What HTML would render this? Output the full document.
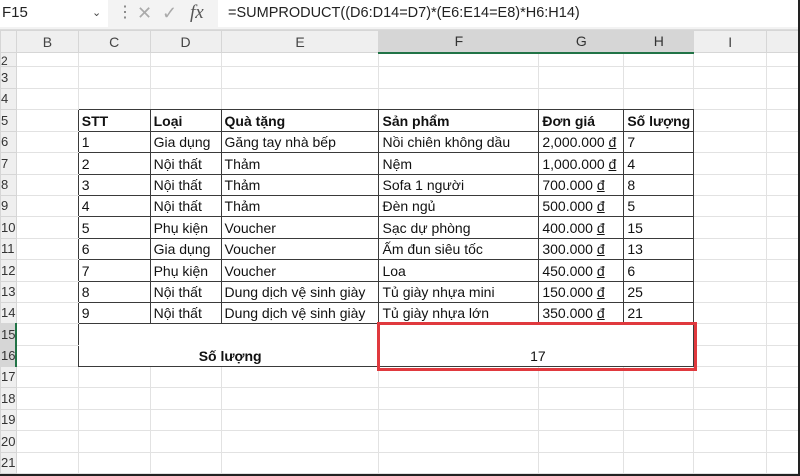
<!DOCTYPE html>
<html><head><meta charset="utf-8"><style>
*{margin:0;padding:0;box-sizing:border-box}
body{width:800px;height:476px;overflow:hidden;background:#fff;font-family:"Liberation Sans",sans-serif;position:relative}
#fb{position:absolute;left:0;top:0;width:800px;height:30px;background:#f3f3f3;border-bottom:1px solid #dcdcdc}
#nb{position:absolute;left:0;top:0;width:108px;height:27px;background:#fff;font-size:15px;line-height:26px;padding-left:2px;color:#222}
#nb span{position:absolute;left:92px;top:0;font-size:11px;color:#444}
#ff{position:absolute;left:218px;top:0;width:580px;height:27px;background:#fff;font-size:14.5px;line-height:26px;padding-left:10px;color:#222}
.ic{position:absolute;top:0;color:#aaa;font-size:18px;line-height:26px}
table{position:absolute;left:0;top:30px;border-collapse:collapse;table-layout:fixed;font-size:14px;color:#111}
td{border:1px solid #e2e2e2;padding:0 0 0 3px;white-space:nowrap;overflow:hidden;line-height:16px}
tr.t td{line-height:10px;font-size:12px;vertical-align:bottom}
tr.h td{background:#efefef;text-align:center;color:#444;font-size:14px;border-color:#d6d6d6;padding:0}
tr.h td.s{background:#d6d6d6;border-bottom:2px solid #217346;color:#333}
td.r{background:#efefef;color:#333;font-size:13px;padding:0;text-align:left;border-color:#d6d6d6}
td.rs{background:#d6d6d6;border-right:2px solid #217346}
.d{border:1px solid #3a3a3a}
.bb{border-bottom:1px solid #3a3a3a}
.br{border-right:1px solid #3a3a3a}
b{font-weight:bold}
u{text-decoration:underline}
#red{position:absolute;left:377px;top:322px;width:320px;height:49px;border:3px solid #e0393e}
#frame{position:absolute;left:0;top:0;width:800px;height:476px;border-right:2px solid #222;border-bottom:2px solid #222;pointer-events:none}
</style></head><body>
<div id="fb">
<div id="nb">F15<span>&#8964;</span></div>
<div class="ic" style="left:117px;color:#777;font-size:16px">&#8942;</div>
<div class="ic" style="left:137px">&#10005;</div>
<div class="ic" style="left:162px">&#10003;</div>
<div class="ic" style="left:190px;color:#555;font-family:'Liberation Serif',serif;font-style:italic;font-size:19px">fx</div>
<div id="ff">=SUMPRODUCT((D6:D14=D7)*(E6:E14=E8)*H6:H14)</div>
</div>
<table>
<colgroup><col style="width:16px"><col style="width:62px"><col style="width:72px"><col style="width:71px"><col style="width:158px"><col style="width:160px"><col style="width:85px"><col style="width:70px"><col style="width:73px"><col style="width:33px"></colgroup>
<tr class="h" style="height:22px"><td></td><td>B</td><td>C</td><td>D</td><td>E</td><td class="s">F</td><td class="s">G</td><td class="s">H</td><td>I</td><td></td></tr>
<tr class="t" style="height:14px"><td class="r">2</td><td></td><td></td><td></td><td></td><td></td><td></td><td></td><td></td><td></td></tr>
<tr style="height:22px"><td class="r">3</td><td></td><td></td><td></td><td></td><td></td><td></td><td></td><td></td><td></td></tr>
<tr style="height:21px"><td class="r">4</td><td></td><td class="bb"></td><td class="bb"></td><td class="bb"></td><td class="bb"></td><td class="bb"></td><td class="bb"></td><td></td><td></td></tr>
<tr style="height:22px"><td class="r">5</td><td class="br"></td><td class="d"><b>STT</b></td><td class="d"><b>Loại</b></td><td class="d"><b>Quà tặng</b></td><td class="d"><b>Sản phẩm</b></td><td class="d"><b>Đơn giá</b></td><td class="d"><b>Số lượng</b></td><td></td><td></td></tr>
<tr style="height:21px"><td class="r">6</td><td class="br"></td><td class="d">1</td><td class="d">Gia dụng</td><td class="d">Găng tay nhà bếp</td><td class="d">Nồi chiên không dầu</td><td class="d">2,000.000 <u>đ</u></td><td class="d">7</td><td></td><td></td></tr>
<tr style="height:22px"><td class="r">7</td><td class="br"></td><td class="d">2</td><td class="d">Nội thất</td><td class="d">Thảm</td><td class="d">Nệm</td><td class="d">1,000.000 <u>đ</u></td><td class="d">4</td><td></td><td></td></tr>
<tr style="height:21px"><td class="r">8</td><td class="br"></td><td class="d">3</td><td class="d">Nội thất</td><td class="d">Thảm</td><td class="d">Sofa 1 người</td><td class="d">700.000 <u>đ</u></td><td class="d">8</td><td></td><td></td></tr>
<tr style="height:21px"><td class="r">9</td><td class="br"></td><td class="d">4</td><td class="d">Nội thất</td><td class="d">Thảm</td><td class="d">Đèn ngủ</td><td class="d">500.000 <u>đ</u></td><td class="d">5</td><td></td><td></td></tr>
<tr style="height:22px"><td class="r">10</td><td class="br"></td><td class="d">5</td><td class="d">Phụ kiện</td><td class="d">Voucher</td><td class="d">Sạc dự phòng</td><td class="d">400.000 <u>đ</u></td><td class="d">15</td><td></td><td></td></tr>
<tr style="height:21px"><td class="r">11</td><td class="br"></td><td class="d">6</td><td class="d">Gia dụng</td><td class="d">Voucher</td><td class="d">Ấm đun siêu tốc</td><td class="d">300.000 <u>đ</u></td><td class="d">13</td><td></td><td></td></tr>
<tr style="height:22px"><td class="r">12</td><td class="br"></td><td class="d">7</td><td class="d">Phụ kiện</td><td class="d">Voucher</td><td class="d">Loa</td><td class="d">450.000 <u>đ</u></td><td class="d">6</td><td></td><td></td></tr>
<tr style="height:21px"><td class="r">13</td><td class="br"></td><td class="d">8</td><td class="d">Nội thất</td><td class="d">Dung dịch vệ sinh giày</td><td class="d">Tủ giày nhựa mini</td><td class="d">150.000 <u>đ</u></td><td class="d">25</td><td></td><td></td></tr>
<tr style="height:21px"><td class="r">14</td><td class="br"></td><td class="d">9</td><td class="d">Nội thất</td><td class="d">Dung dịch vệ sinh giày</td><td class="d">Tủ giày nhựa lớn</td><td class="d">350.000 <u>đ</u></td><td class="d">21</td><td></td><td></td></tr>
<tr style="height:22px"><td class="r rs">15</td><td class="br"></td><td class="d" colspan="3" rowspan="2" style="text-align:center;vertical-align:bottom;padding-bottom:2px"><b>Số lượng</b></td><td class="d" colspan="3" rowspan="2" style="text-align:center;vertical-align:bottom;padding-bottom:2px">17</td><td></td><td></td></tr>
<tr style="height:21px"><td class="r rs">16</td><td class="br"></td><td></td><td></td></tr>
<tr style="height:21px"><td class="r">17</td><td></td><td></td><td></td><td></td><td></td><td></td><td></td><td></td><td></td></tr>
<tr style="height:22px"><td class="r">18</td><td></td><td></td><td></td><td></td><td></td><td></td><td></td><td></td><td></td></tr>
<tr style="height:21px"><td class="r">19</td><td></td><td></td><td></td><td></td><td></td><td></td><td></td><td></td><td></td></tr>
<tr style="height:22px"><td class="r">20</td><td></td><td></td><td></td><td></td><td></td><td></td><td></td><td></td><td></td></tr>
<tr style="height:21px"><td class="r">21</td><td></td><td></td><td></td><td></td><td></td><td></td><td></td><td></td><td></td></tr>
</table>
<div id="red"></div>
<div id="frame"></div>
</body></html>
